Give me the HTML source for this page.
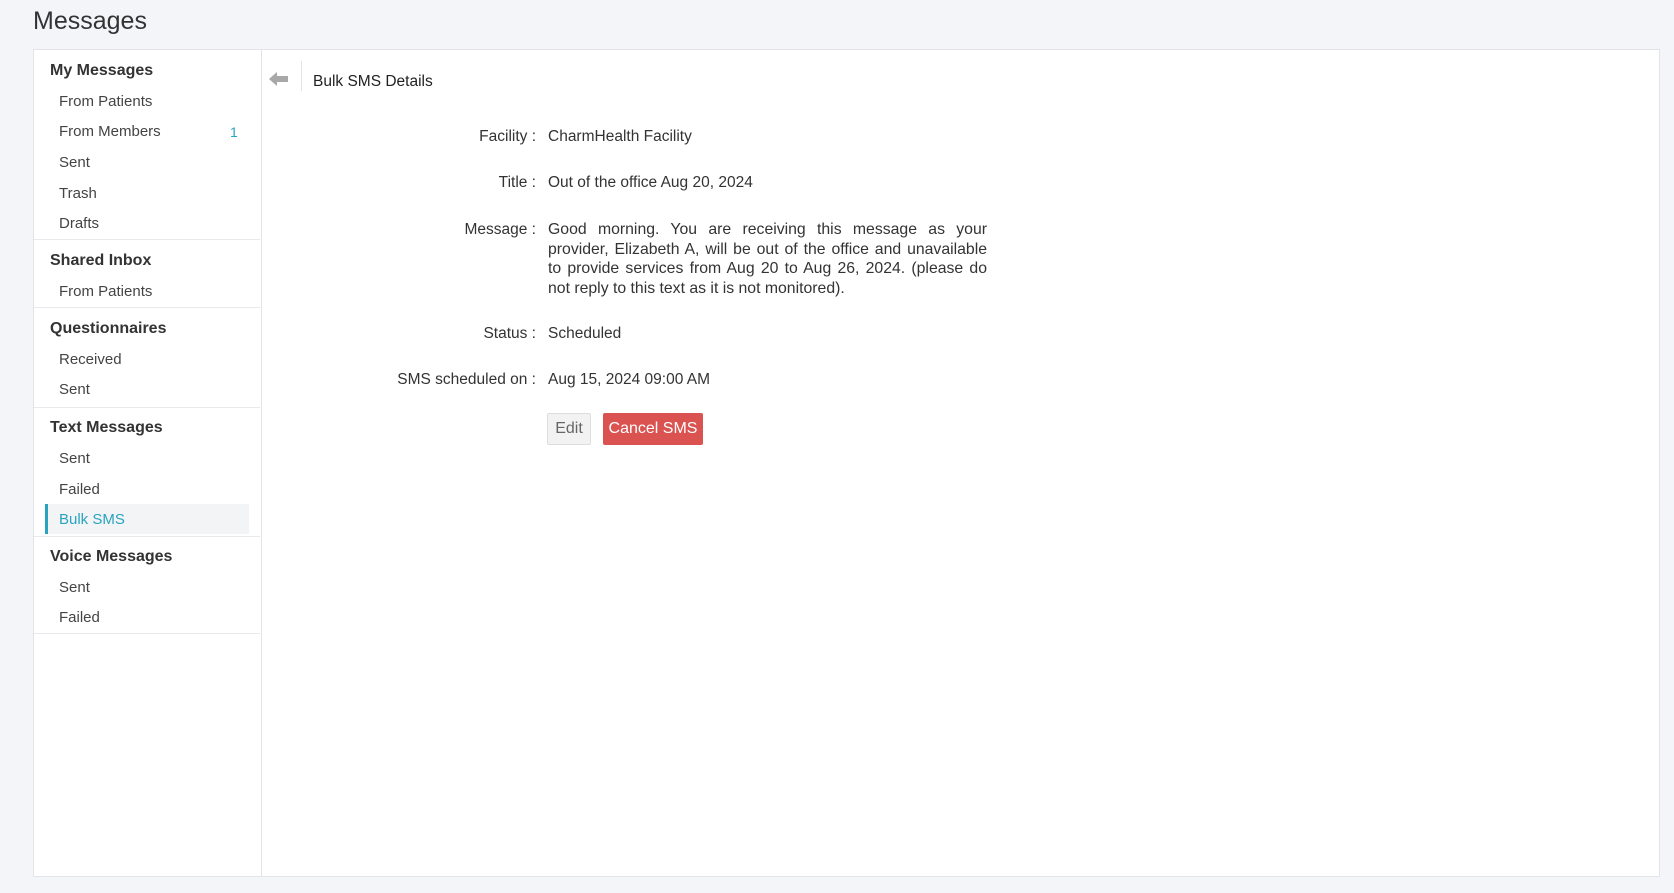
<!DOCTYPE html>
<html><head><style>
body{margin:0;width:1674px;height:893px;background:#f4f5f9;font-family:"Liberation Sans",sans-serif;color:#333;position:relative;overflow:hidden}
.t{position:absolute;white-space:nowrap;line-height:20px}
h1{position:absolute;left:33px;top:7px;margin:0;font-weight:normal;font-size:25px;color:#333}
.panel{position:absolute;left:33px;top:49px;width:1627px;height:828px;background:#fff;border:1px solid #e2e4e8;box-sizing:border-box}
.side{position:absolute;left:33px;top:49px;width:228px;height:828px;border-right:1px solid #e2e4e8}
.hd{font-weight:bold;font-size:16px;left:50px;color:#333}
.it{font-size:15px;left:59px;color:#444}
.dv{position:absolute;left:34px;width:226px;height:1px;background:#e8e9ec}
.lb{font-size:15.5px;right:1138px;text-align:right}
.vl{font-size:15.5px;left:548px}
</style></head><body>
<h1>Messages</h1>
<div class="panel"></div>
<div class="side"></div>
<div class="t hd" style="top:61px">My Messages</div>
<div class="t it" style="top:92px">From Patients</div>
<div class="t it" style="top:122px">From Members</div>
<div class="t" style="left:230px;top:122px;font-size:14px;color:#29a3c0">1</div>
<div class="t it" style="top:153px">Sent</div>
<div class="t it" style="top:184px">Trash</div>
<div class="t it" style="top:214px">Drafts</div>
<div class="dv" style="top:239px"></div>
<div class="t hd" style="top:251px">Shared Inbox</div>
<div class="t it" style="top:282px">From Patients</div>
<div class="dv" style="top:307px"></div>
<div class="t hd" style="top:319px">Questionnaires</div>
<div class="t it" style="top:350px">Received</div>
<div class="t it" style="top:380px">Sent</div>
<div class="dv" style="top:407px"></div>
<div class="t hd" style="top:418px">Text Messages</div>
<div class="t it" style="top:449px">Sent</div>
<div class="t it" style="top:480px">Failed</div>
<div style="position:absolute;left:45px;top:504px;width:204px;height:30px;background:#f3f4f6;border-left:3px solid #29a3c0;box-sizing:border-box"></div>
<div class="t it" style="top:510px;color:#29a3c0">Bulk SMS</div>
<div class="dv" style="top:536px"></div>
<div class="t hd" style="top:547px">Voice Messages</div>
<div class="t it" style="top:578px">Sent</div>
<div class="t it" style="top:608px">Failed</div>
<div class="dv" style="top:633px"></div>
<svg style="position:absolute;left:268px;top:71px" width="22" height="16" viewBox="0 0 22 16"><path d="M1 8 L9 1 L9 5 L20 5 L20 11 L9 11 L9 15 Z" fill="#a8a8a8"/></svg>
<div style="position:absolute;left:301px;top:61px;width:1px;height:30px;background:#e2e4e8"></div>
<div class="t" style="left:313px;top:72px;font-size:15.5px;color:#222">Bulk SMS Details</div>
<div class="t lb" style="top:127px">Facility :</div><div class="t vl" style="top:127px">CharmHealth Facility</div>
<div class="t lb" style="top:173px">Title :</div><div class="t vl" style="top:173px">Out of the office Aug 20, 2024</div>
<div class="t lb" style="top:220px">Message :</div>
<div style="position:absolute;left:548px;top:220px;width:439px;font-size:15.8px;line-height:19.5px;text-align:justify;color:#333">Good morning. You are receiving this message as your provider, Elizabeth A, will be out of the office and unavailable to provide services from Aug 20 to Aug 26, 2024. (please do not reply to this text as it is not monitored).</div>
<div class="t lb" style="top:324px">Status :</div><div class="t vl" style="top:324px">Scheduled</div>
<div class="t lb" style="top:370px">SMS scheduled on :</div><div class="t vl" style="top:370px">Aug 15, 2024 09:00 AM</div>
<div style="position:absolute;left:547px;top:413px;width:44px;height:32px;box-sizing:border-box;border:1px solid #ddd;border-radius:2px;background:#f2f2f2;color:#666;font-size:16px;line-height:30px;text-align:center">Edit</div>
<div style="position:absolute;left:603px;top:413px;width:100px;height:32px;border-radius:2px;background:#db5350;color:#fff;font-size:16px;line-height:32px;text-align:center">Cancel SMS</div>
</body></html>
